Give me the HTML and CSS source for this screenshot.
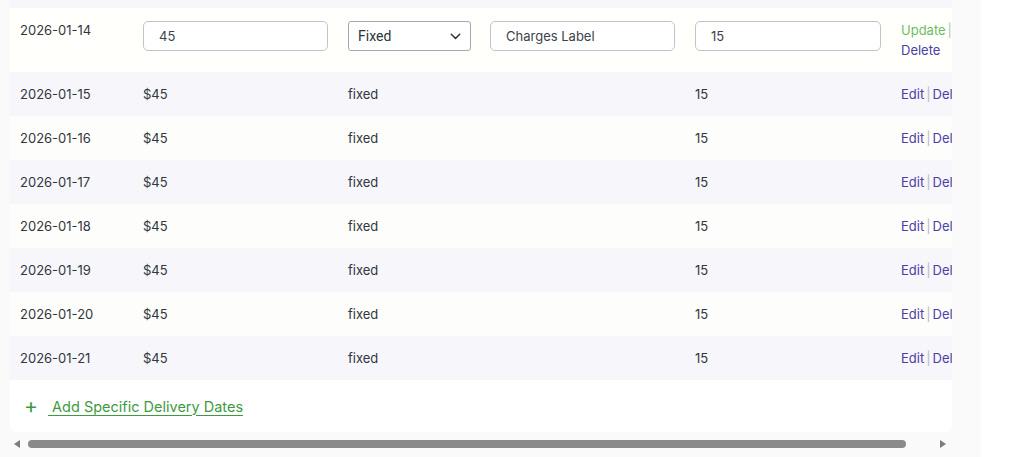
FILE: index.html
```html
<!DOCTYPE html>
<html lang="en">
<head>
<meta charset="utf-8">
<title>Specific Delivery Dates</title>
<link rel="stylesheet" href="styles.css">
</head>
<body>
<div class="page">
  <div class="card">
    <div class="table-scroll">
      <div class="row-clipped"></div>
      <table class="dates-table">
        <colgroup>
          <col class="c-date"><col class="c-amount"><col class="c-type"><col class="c-label"><col class="c-value"><col class="c-actions">
        </colgroup>
        <tbody>
          <tr class="row-edit">
            <td class="cell-date">2026-01-14</td>
            <td><input class="field" type="text" value="45"></td>
            <td>
              <div class="select">
                <span>Fixed</span>
                <svg class="chevron" width="11" height="7" viewBox="0 0 11 7"><path d="M1.3 1.3 5.5 5.5l4.2-4.2" fill="none" stroke="#2c3338" stroke-width="1.5" stroke-linecap="round" stroke-linejoin="round"/></svg>
              </div>
            </td>
            <td><input class="field" type="text" value="Charges Label"></td>
            <td><input class="field" type="text" value="15"></td>
            <td class="cell-actions"><a class="link-update" href="#">Update</a><span class="sep">|</span> <a class="link" href="#">Delete</a></td>
          </tr>
          <tr class="row-a"><td>2026-01-15</td><td>$45</td><td>fixed</td><td></td><td>15</td><td class="nowrap"><a class="link" href="#">Edit</a><span class="sep">|</span><a class="link" href="#">Delete</a></td></tr>
          <tr class="row-b"><td>2026-01-16</td><td>$45</td><td>fixed</td><td></td><td>15</td><td class="nowrap"><a class="link" href="#">Edit</a><span class="sep">|</span><a class="link" href="#">Delete</a></td></tr>
          <tr class="row-a"><td>2026-01-17</td><td>$45</td><td>fixed</td><td></td><td>15</td><td class="nowrap"><a class="link" href="#">Edit</a><span class="sep">|</span><a class="link" href="#">Delete</a></td></tr>
          <tr class="row-b"><td>2026-01-18</td><td>$45</td><td>fixed</td><td></td><td>15</td><td class="nowrap"><a class="link" href="#">Edit</a><span class="sep">|</span><a class="link" href="#">Delete</a></td></tr>
          <tr class="row-a"><td>2026-01-19</td><td>$45</td><td>fixed</td><td></td><td>15</td><td class="nowrap"><a class="link" href="#">Edit</a><span class="sep">|</span><a class="link" href="#">Delete</a></td></tr>
          <tr class="row-b"><td>2026-01-20</td><td>$45</td><td>fixed</td><td></td><td>15</td><td class="nowrap"><a class="link" href="#">Edit</a><span class="sep">|</span><a class="link" href="#">Delete</a></td></tr>
          <tr class="row-a"><td>2026-01-21</td><td>$45</td><td>fixed</td><td></td><td>15</td><td class="nowrap"><a class="link" href="#">Edit</a><span class="sep">|</span><a class="link" href="#">Delete</a></td></tr>
        </tbody>
      </table>
    </div>
    <div class="add-bar">
      <span class="plus">+</span>
      <a class="add-link" href="#">&nbsp;Add Specific Delivery Dates</a>
    </div>
  </div>
  <div class="scrollbar">
    <span class="arrow arrow-left"></span>
    <div class="track"><div class="thumb"></div></div>
    <span class="arrow arrow-right"></span>
  </div>
</div>
</body>
</html>
```

FILE: styles.css
```css
html, body {
  margin: 0;
  padding: 0;
  background: #ffffff;
}

body {
  font-family: Inter, "Noto Sans", sans-serif;
  font-size: 13px;
  color: #32373c;
}

.page {
  width: 971px;
  height: 457px;
  padding-left: 10px;
  background: #fafafa;
  overflow: hidden;
}

.card {
  width: 942px;
  background: #ffffff;
  border-radius: 0 0 8px 8px;
  overflow: hidden;
}

.table-scroll {
  width: 942px;
  overflow: hidden;
}

.row-clipped {
  width: 981px;
  height: 8px;
  background: #f6f6fb;
}

.dates-table {
  width: 981px;
  table-layout: fixed;
  border-collapse: collapse;
}

.c-date { width: 123px; }
.c-amount { width: 205px; }
.c-type { width: 142px; }
.c-label { width: 205px; }
.c-value { width: 206px; }
.c-actions { width: 100px; }

.dates-table td {
  padding: 12px 10px;
  line-height: 20px;
  vertical-align: middle;
  text-align: left;
}

.row-edit td {
  background: #fffffc;
  vertical-align: top;
}

.row-a td { background: #f6f6fb; }
.row-b td { background: #fdfdfb; }

.field {
  display: block;
  box-sizing: border-box;
  width: 100%;
  height: 30px;
  margin: 1px 0 0;
  padding: 0 15px;
  border: 1px solid #c3c4c7;
  border-radius: 5px;
  background: #ffffff;
  font-family: Inter, "Noto Sans", sans-serif;
  font-size: 13px;
  color: #3c434a;
}

.select {
  box-sizing: border-box;
  width: 123px;
  height: 30px;
  margin-top: 1px;
  padding: 0 9px 0 9px;
  display: flex;
  align-items: center;
  justify-content: space-between;
  border: 1px solid #a7aaad;
  border-radius: 3px;
  background: #ffffff;
  font-family: Roboto, "Liberation Sans", sans-serif;
  font-size: 14px;
  color: #2c3338;
}

.chevron { display: block; }

.cell-actions { white-space: normal; }
.nowrap { white-space: nowrap; }

.link {
  color: #4b3ea4;
  text-decoration: none;
}

.link-update {
  color: #6cbd62;
  text-decoration: none;
}

.sep {
  color: #b8b9bc;
  margin: 0 2px;
}

.add-bar {
  height: 52px;
  display: flex;
  align-items: center;
  padding-left: 14px;
}

.plus {
  color: #3f9a3f;
  font-size: 21px;
  font-weight: 400;
  line-height: 20px;
  width: 24px;
  margin-top: -1px;
}

.add-link {
  color: #3f9a3f;
  text-decoration: underline;
  text-underline-offset: 3px;
  font-size: 14.5px;
}

.scrollbar {
  width: 942px;
  height: 15px;
  display: flex;
  align-items: center;
  margin-top: 4px;
}

.arrow {
  width: 0;
  height: 0;
  border-top: 4px solid transparent;
  border-bottom: 4px solid transparent;
}

.arrow-left {
  margin-left: 4px;
  border-right: 6px solid #7d7d7d;
}

.arrow-right {
  margin-left: 34px;
  border-left: 6px solid #7d7d7d;
}

.track {
  width: 878px;
  margin-left: 8px;
}

.thumb {
  height: 8px;
  border-radius: 4px;
  background: #8a8a8a;
}
```
